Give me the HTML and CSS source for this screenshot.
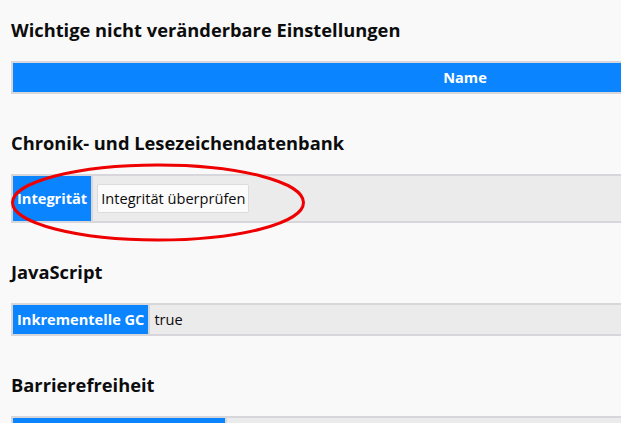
FILE: index.html
```html
<!DOCTYPE html>
<html lang="de">
<head>
<meta charset="utf-8">
<title>Fehlerbehebungsinformationen</title>
<link rel="stylesheet" href="styles.css">
</head>
<body>
<section class="sec">
  <h2 class="title">Wichtige nicht veränderbare Einstellungen</h2>
  <table class="data">
    <tr><th class="head">Name</th></tr>
  </table>
</section>
<section class="sec">
  <h2 class="title">Chronik- und Lesezeichendatenbank</h2>
  <table class="data">
    <tr><th class="key">Integrität</th><td class="val tall"><button class="btn">Integrität überprüfen</button></td></tr>
  </table>
</section>
<section class="sec">
  <h2 class="title">JavaScript</h2>
  <table class="data">
    <tr><th class="key">Inkrementelle GC</th><td class="val">true</td></tr>
  </table>
</section>
<section class="sec">
  <h2 class="title">Barrierefreiheit</h2>
  <table class="data">
    <tr><th class="key wide">Aktiviert</th><td class="val">false</td></tr>
  </table>
</section>
<svg class="mark" width="298" height="81" viewBox="0 0 298 81" aria-hidden="true">
  <ellipse cx="149" cy="40.5" rx="145.5" ry="37.5" fill="none" stroke="#ee0000" stroke-width="3"/>
</svg>
</body>
</html>
```
FILE: styles.css
```css
html {
  background: #f9f9fa;
}
body {
  margin: 0;
  padding: 18px 0 0 11px;
  position: relative;
  overflow: hidden;
  font-family: "Open Sans", "DejaVu Sans", sans-serif;
  color: #0c0c0d;
}
.sec {
  margin-bottom: 37px;
}
.title {
  margin: 0 0 19px;
  font-size: 18.3px;
  line-height: 24px;
  font-weight: 700;
}
.data {
  width: 908px;
  border-spacing: 2px;
  background: #d7d7db;
  font-size: 14.6px;
}
.data th {
  background: #0a84ff;
  color: #ffffff;
  font-weight: 700;
  padding: 4px;
  line-height: 21px;
  text-align: left;
  white-space: nowrap;
}
.data th.head {
  text-align: center;
}
.key {
  width: 1px;
}
.key.wide {
  width: 204px;
}
.val {
  background: #ebebeb;
  padding: 4px;
  line-height: 21px;
}
.val.tall {
  padding: 8px 4px;
}
.btn {
  font: inherit;
  font-size: 14.6px;
  line-height: 21px;
  color: #0c0c0d;
  background: #fbfbfb;
  border: 1px solid #dcdcdf;
  border-radius: 2px;
  height: 29px;
  padding: 0 3px;
  display: block;
}
.mark {
  position: absolute;
  left: 9px;
  top: 162px;
}
```
